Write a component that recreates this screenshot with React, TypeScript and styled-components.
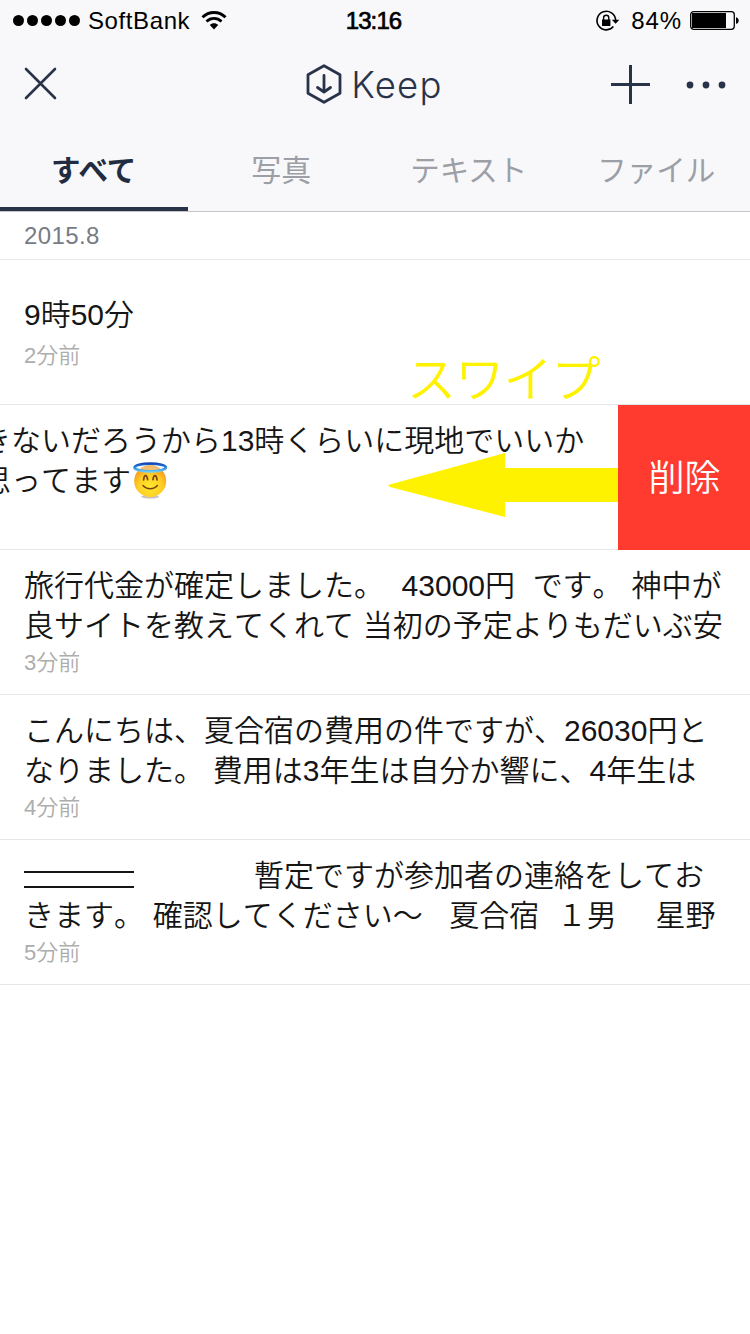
import React from 'react';
import styled, { createGlobalStyle } from 'styled-components';

const NAVY = '#28334a';

const GlobalStyle = createGlobalStyle`
  * { box-sizing: border-box; }
  body {
    margin: 0;
    background: #fff;
    font-family: 'Liberation Sans', 'Noto Sans CJK JP', sans-serif;
  }
`;

const Screen = styled.main`
  position: relative;
  width: 750px;
  height: 1334px;
  overflow: hidden;
  background: #fff;
`;

const Header = styled.header`
  display: flex;
  flex-direction: column;
  height: 212px;
  background: #f8f8fa;
  border-bottom: 1px solid #c4c5c7;
`;

const StatusBar = styled.div`
  display: grid;
  grid-template-columns: 1fr auto 1fr;
  align-items: center;
  height: 40px;
  padding: 0 11px 0 13px;
  color: #000;
`;

const StatusGroup = styled.div<{ $end?: boolean }>`
  display: flex;
  align-items: center;
  justify-content: ${(p) => (p.$end ? 'flex-end' : 'flex-start')};
`;

const StatusText = styled.span<{ $spacing: number }>`
  font-size: 24px;
  line-height: 40px;
  height: 40px;
  padding-top: 1px;
  letter-spacing: ${(p) => p.$spacing}px;
`;

const Clock = styled(StatusText)`
  margin-right: 5px;
  -webkit-text-stroke: 0.7px #000;
`;

const Signal = styled.div`
  display: flex;
  gap: 3px;
  margin-right: 8px;
`;

const SignalDot = styled.i`
  width: 11px;
  height: 11px;
  border-radius: 50%;
  background: #000;
`;

const Icon = styled.svg<{ $ml?: number; $mr?: number }>`
  display: block;
  flex: none;
  overflow: visible;
  margin-left: ${(p) => p.$ml ?? 0}px;
  margin-right: ${(p) => p.$mr ?? 0}px;
`;

const NavBar = styled.div`
  display: grid;
  grid-template-columns: 1fr auto 1fr;
  align-items: center;
  height: 88px;
  padding: 0 24px 0 23px;
`;

const NavSide = styled.div<{ $end?: boolean }>`
  display: flex;
  align-items: center;
  gap: 34px;
  justify-content: ${(p) => (p.$end ? 'flex-end' : 'flex-start')};
`;

const Brand = styled.h1`
  display: flex;
  align-items: center;
  gap: 9px;
  margin: 0;
  color: ${NAVY};
`;

const BrandName = styled.span`
  font-family: Inter, sans-serif;
  font-size: 36.5px;
  font-weight: 350;
  line-height: 44px;
  padding-top: 2px;
  letter-spacing: 1.2px;
`;

const Tabs = styled.nav`
  display: grid;
  grid-template-columns: repeat(4, 187.5px);
  height: 84px;
`;

const Tab = styled.a<{ $active?: boolean; $size: number }>`
  display: flex;
  justify-content: center;
  height: ${(p) => (p.$active ? 84 : 83)}px;
  line-height: ${(p) => (p.$active ? 87 : 88)}px;
  font-size: ${(p) => p.$size}px;
  font-weight: ${(p) => (p.$active ? 700 : 400)};
  color: ${(p) => (p.$active ? '#222c40' : '#9c9fa6')};
  border-bottom: ${(p) => (p.$active ? `4px solid ${NAVY}` : '0')};
`;

const Month = styled.h2`
  margin: 0;
  height: 48px;
  padding-left: 24px;
  border-bottom: 1px solid #e8e8e8;
  color: #777b84;
  font-size: 24px;
  font-weight: 400;
  line-height: 47px;
  letter-spacing: 0.4px;
`;

const Row = styled.article`
  position: relative;
  display: flex;
  height: 145px;
  border-bottom: 1px solid #e6e6e6;
`;

const RowBody = styled.div<{ $swiped?: boolean }>`
  display: flex;
  flex: 1;
  flex-direction: column;
  justify-content: ${(p) => (p.$swiped ? 'flex-start' : 'center')};
  padding-top: ${(p) => (p.$swiped ? 16 : 0)}px;
  padding-left: ${(p) => (p.$swiped ? 0 : 24)}px;
  margin-left: ${(p) => (p.$swiped ? -19 : 0)}px;
  min-width: 0;
`;

const Line = styled.div`
  display: flex;
  align-items: center;
  height: 40px;
  color: #151515;
  font-size: 30px;
  font-weight: 350;
  font-kerning: none;
  line-height: 40px;
  white-space: pre;
`;

const Space = styled.span<{ $count: number }>`
  width: ${(p) => p.$count * 8.8}px;
`;

const DoubleRule = styled.span`
  width: 110px;
  height: 17px;
  margin: 7px 120px 0 0;
  border: solid #151515;
  border-width: 2px 0;
`;

const Time = styled.time<{ $single?: boolean }>`
  height: ${(p) => (p.$single ? 34 : 32)}px;
  padding-top: ${(p) => (p.$single ? 5 : 1)}px;
  color: #adadad;
  font-size: 22px;
  font-weight: 350;
  line-height: 32px;
`;

const DeleteButton = styled.button`
  display: flex;
  justify-content: center;
  width: 132px;
  height: 145px;
  padding: 0 0 0 1px;
  border: 0;
  background: #ff3b30;
  color: #fff;
  font: 350 36px/141px 'Noto Sans CJK JP', sans-serif;
`;

const SwipeHint = styled.div`
  position: absolute;
  right: 132px;
  top: -59px;
  display: flex;
  flex-direction: column;
  width: 230px;
  color: #fff200;
`;

const SwipeLabel = styled.span`
  padding-left: 19px;
  font: 350 49px/60px 'Noto Sans CJK JP', sans-serif;
  letter-spacing: -0.8px;
  white-space: nowrap;
`;

const SwipeArrow = styled(Icon)`
  margin-top: 47px;
`;

const Angel = () => (
  <Icon $ml={2} width="35" height="38" viewBox="0 0 35 38">
    <defs>
      <radialGradient id="face" cx="50%" cy="68%" r="62%">
        <stop offset="0" stopColor="#ffe92e" />
        <stop offset="0.6" stopColor="#ffce25" />
        <stop offset="1" stopColor="#f79a1e" />
      </radialGradient>
      <linearGradient id="halo" gradientUnits="userSpaceOnUse" x1="0" y1="1" x2="0" y2="11">
        <stop offset="0" stopColor="#0f3fb4" />
        <stop offset="0.45" stopColor="#2f8be0" />
        <stop offset="1" stopColor="#7fdcf5" />
      </linearGradient>
    </defs>
    <ellipse cx="17.2" cy="34.6" rx="9" ry="2" fill="#c9c4bd" />
    <circle cx="17.2" cy="19" r="16" fill="url(#face)" />
    <path
      d="M10.6 17.800c.3-3 1-4.200 1.900-4.200s1.800 1.200 2.100 4M20 17.600c.3-2.800 1-4 1.900-4s1.800 1.200 2.100 4.200"
      fill="none"
      stroke="#7a4210"
      strokeWidth="1.7"
      strokeLinecap="round"
    />
    <path d="M10 23.500c3.600 4.300 10.800 4.300 14.400 0" fill="none" stroke="#7a4210" strokeWidth="1.500" strokeLinecap="round" />
    <ellipse cx="17.200" cy="5.500" rx="15.600" ry="3.900" fill="#eaf6ff" fillOpacity=".35" stroke="url(#halo)" strokeWidth="2.800" />
  </Icon>
);

type Note = { lines: string[]; time: string; ruled?: boolean };

const notesAfter: Note[] = [
  {
    lines: ['旅行代金が確定しました。  43000円  です。 神中が', '良サイトを教えてくれて 当初の予定よりもだいぶ安'],
    time: '3分前',
  },
  {
    lines: ['こんにちは、夏合宿の費用の件ですが、26030円と', 'なりました。 費用は3年生は自分か響に、4年生は'],
    time: '4分前',
  },
  {
    ruled: true,
    lines: ['暫定ですが参加者の連絡をしてお', 'きます。 確認してください〜   夏合宿  １男　 星野'],
    time: '5分前',
  },
];

const spaced = (text: string) =>
  text.split(/( +)/).map((part, i) =>
    part.startsWith(' ') ? (
      <Space key={i} $count={part.length}>
        {' '}
      </Space>
    ) : (
      <span key={i}>{part}</span>
    ),
  );

const NoteRow = ({ lines, time, ruled }: Note) => (
  <Row>
    <RowBody>
      {lines.map((line, i) => (
        <Line key={i}>
          {ruled && i === 0 && <DoubleRule />}
          {spaced(line)}
        </Line>
      ))}
      <Time $single={lines.length === 1}>{time}</Time>
    </RowBody>
  </Row>
);

export default function App() {
  return (
    <>
      <GlobalStyle />
      <Screen>
        <Header>
          <StatusBar>
            <StatusGroup>
              <Signal>
                {[0, 1, 2, 3, 4].map((n) => (
                  <SignalDot key={n} />
                ))}
              </Signal>
              <StatusText $spacing={0.6}>SoftBank</StatusText>
              <Icon $ml={11} width="26" height="19" viewBox="0 0 26 19">
                <path d="M1.500 6.300C8-.1 18-.1 24.500 6.300" fill="none" stroke="#000" strokeWidth="3" />
                <path d="M5.500 10.500c4.300-4.100 10.700-4.100 15 0" fill="none" stroke="#000" strokeWidth="2.800" />
                <path d="M8.800 14.100c2.300-2.500 6.100-2.500 8.400 0L13 18.500z" />
              </Icon>
            </StatusGroup>
            <Clock $spacing={-0.9}>13:16</Clock>
            <StatusGroup $end>
              <Icon $mr={11} width="24" height="21" viewBox="0 0 24 21">
                <path d="M17.400 16.600A9.300 9.300 0 1 1 19.600 10" fill="none" stroke="#000" strokeWidth="1.600" />
                <path d="M15.800 9.800h7.600l-3.800 4z" />
                <path d="M6 9.500h8.400V16H6z" />
                <path d="M7.600 10V7.800a2.600 2.600 0 0 1 5.200 0V10" fill="none" stroke="#000" strokeWidth="1.400" />
              </Icon>
              <StatusText $spacing={0.9}>84%</StatusText>
              <Icon $ml={8} width="49" height="19" viewBox="0 0 49 19">
                <rect x=".7" y=".7" width="43.600" height="17.600" rx="3" fill="none" stroke="#000" strokeWidth="1.300" />
                <path d="M2 2h34v15H2z" />
                <path d="M46 6.200c3.600.6 3.600 6 0 6.600z" />
              </Icon>
            </StatusGroup>
          </StatusBar>
          <NavBar>
            <NavSide>
              <Icon width="34" height="34" viewBox="0 0 34 34">
                <path d="M3 2l29 29M32 2L3 31" stroke={NAVY} strokeWidth="2.600" strokeLinecap="round" />
              </Icon>
            </NavSide>
            <Brand>
              <Icon width="36" height="40" viewBox="0 0 36 40" fill="none" stroke={NAVY} strokeWidth="2.800" strokeLinejoin="round" strokeLinecap="round">
                <path d="M18 1.700L34 10.800V29.200L18 38.300L2 29.200V10.800z" />
                <path d="M18 11.500v16.500M11.500 23.500l6.500 4.500 6.500-4.500" />
              </Icon>
              <BrandName>Keep</BrandName>
            </Brand>
            <NavSide $end>
              <Icon width="40" height="40" viewBox="0 0 40 40">
                <path d="M1 20.500h39M20.500 1v39" stroke={NAVY} strokeWidth="3" />
              </Icon>
              <Icon width="42" height="8" viewBox="0 0 42 8" fill={NAVY}>
                <circle cx="6" cy="5" r="3.400" />
                <circle cx="22" cy="5" r="3.400" />
                <circle cx="38" cy="5" r="3.400" />
              </Icon>
            </NavSide>
          </NavBar>
          <Tabs>
            <Tab $active $size={29.5}>すべて</Tab>
            <Tab $size={30}>写真</Tab>
            <Tab $size={29.5}>テキスト</Tab>
            <Tab $size={29.5}>ファイル</Tab>
          </Tabs>
        </Header>

        <Month>2015.8</Month>
        <NoteRow lines={['9時50分']} time="2分前" />
        <Row>
          <RowBody $swiped>
            <Line>きないだろうから13時くらいに現地でいいか</Line>
            <Line>
              思ってます
              <Angel />
            </Line>
          </RowBody>
          <DeleteButton>削除</DeleteButton>
          <SwipeHint>
            <SwipeLabel>スワイプ</SwipeLabel>
            <SwipeArrow width="230" height="64" viewBox="0 0 230 64">
              <path d="M0 32L117 0V15H230V49H117V64L2 34z" fill="#fff200" />
            </SwipeArrow>
          </SwipeHint>
        </Row>
        {notesAfter.map((note) => (
          <NoteRow key={note.time} {...note} />
        ))}
      </Screen>
    </>
  );
}
